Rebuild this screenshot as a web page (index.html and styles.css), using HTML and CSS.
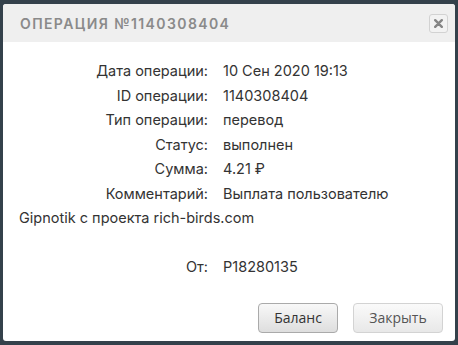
FILE: index.html
```html
<!DOCTYPE html>
<html lang="ru">
<head>
  <meta charset="UTF-8" />
  <title>Операция №1140308404</title>
  <link rel="stylesheet" href="styles.css">
</head>
<body>
  <div class="dialog">
    <div class="dialog-header">
      <div class="dialog-title">Операция №1140308404</div>
      <button class="dialog-close" title="Закрыть">
        <svg width="9" height="9" viewBox="0 0 9 9"><path d="M1.2 1.2L7.8 7.8M7.8 1.2L1.2 7.8" stroke="#858585" stroke-width="2.4" stroke-linecap="round"/></svg>
      </button>
    </div>

    <div class="dialog-body">
      <div class="row"><span class="label">Дата операции:</span>10 Сен 2020 19:13</div>
      <div class="row"><span class="label">ID операции:</span>1140308404</div>
      <div class="row"><span class="label">Тип операции:</span>перевод</div>
      <div class="row"><span class="label">Статус:</span>выполнен</div>
      <div class="row"><span class="label">Сумма:</span>4.21 &#8381;</div>
      <div class="row"><span class="label">Комментарий:</span>Выплата пользователю Gipnotik с проекта rich-birds.com</div>
      <div class="row">&nbsp;</div>
      <div class="row"><span class="label">От:</span>P18280135</div>
    </div>

    <div class="dialog-footer">
      <button class="btn">Баланс</button>
      <button class="btn btn-light">Закрыть</button>
    </div>
  </div>
</body>
</html>
```

FILE: styles.css
```css
* {
  margin: 0; padding: 0; box-sizing: border-box;
}

body {
  background: #34414b;
  padding: 4px 3px;
  font-family: 'Inter', 'Noto Sans', sans-serif;
}

.dialog {
  background: #fff;
  height: 337px;
  border-radius: 3px;
  overflow: hidden;
}

.dialog-header {
  background: #efefef;
  height: 38px;
  padding: 0 7px 0 17px;
  display: flex;
  justify-content: space-between;
  align-items: center;
}

.dialog-title {
  font-size: 14px;
  font-weight: 600;
  letter-spacing: 1.4px;
  text-transform: uppercase;
  color: #8a8a8a;
}

.dialog-close {
  width: 19px;
  height: 19px;
  border: 1px solid #d2d2d2;
  border-radius: 3px;
  background: #f2f2f2;
  display: flex;
  align-items: center;
  justify-content: center;
  cursor: pointer;
}

.dialog-body {
  padding: 17px 24px 0 16px;
  font-size: 14.5px;
  line-height: 24.5px;
  color: #333;
}

.label {
  display: inline-block;
  width: 189px;
  margin-right: 15px;
  text-align: right;
  vertical-align: top;
}

.dialog-footer {
  display: flex;
  justify-content: flex-end;
  gap: 15px;
  padding: 23px 12px 0 0;
}

.btn {
  height: 30px;
  padding: 0 14px;
  font-family: 'Open Sans', sans-serif;
  font-size: 14px;
  color: #333;
  border: 1px solid #aaa;
  border-radius: 4px;
  background: linear-gradient(#f8f8f8, #dedede);
  cursor: pointer;
}

.btn:first-child {
  width: 80px;
}

.btn-light {
  width: 90px;
  color: #555;
  border-color: #d3d3d3;
  background: linear-gradient(#fafafa, #e8e8e8);
}
```
